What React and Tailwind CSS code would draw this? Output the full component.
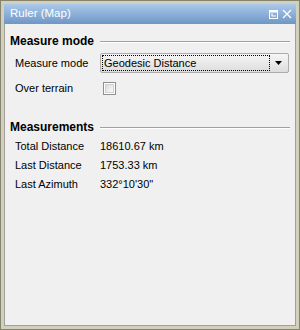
const font = { fontFamily: '"Liberation Sans", Arial, sans-serif' };

function Heading({ children }) {
  return (
    <div className="flex items-center h-4 pl-[5px] pr-[5px]">
      <span className="text-[12px] font-bold text-black leading-none">{children}</span>
      <div className="flex-1 ml-[6px] mt-[2px] flex flex-col">
        <div className="h-px bg-[#a0a0a0]" />
        <div className="h-px bg-white" />
      </div>
    </div>
  );
}

function Row({ label, children }) {
  return (
    <div className="flex items-center h-[19px] pl-[10px]">
      <span className="w-[85px] text-[11px] text-black">{label}</span>
      <span className="text-[11px] text-black">{children}</span>
    </div>
  );
}

export default function App() {
  return (
    <div className="w-[300px] h-[330px] bg-[#85846f] p-px" style={font}>
      <div className="h-full bg-[#d3cfbd] p-[3px] flex flex-col">
        <div className="h-5 flex items-center pl-[6px] pr-[4px] bg-gradient-to-b from-[#abc9ea] to-[#6e97c5]">
          <span className="text-[11.5px] text-white flex-1">Ruler (Map)</span>
          <svg width="9" height="9" viewBox="0 0 9 9" className="mr-[4px]">
            <rect x="0.5" y="0.5" width="8" height="8" fill="none" stroke="white" />
            <rect x="1" y="1" width="7" height="1.5" fill="white" />
            <path d="M3 3.5 V6 H7" fill="none" stroke="white" strokeWidth="1.2" />
          </svg>
          <svg width="10" height="10" viewBox="0 0 10 10">
            <path d="M1 1 L9 9 M9 1 L1 9" stroke="white" strokeWidth="1.3" />
          </svg>
        </div>
        <div className="flex-1 bg-[#f0f0f0] border border-t-0 border-[#a09f98]">
          <div className="pt-[9px]">
            <Heading>Measure mode</Heading>
          </div>
          <div className="flex items-center h-5 mt-[4px] pl-[10px]">
            <span className="w-[85px] text-[11px] text-black">Measure mode</span>
            <div className="w-[189px] h-5 border border-[#acacac] rounded-[2px] bg-gradient-to-b from-[#f6f6f6] to-[#dddddd] flex items-center p-px">
              <div className="flex-1 h-full border border-dotted border-black flex items-center pl-px">
                <span className="text-[11px] text-black">Geodesic Distance</span>
              </div>
              <div className="w-[17px] flex items-center justify-center">
                <svg width="7" height="4" viewBox="0 0 7 4">
                  <path d="M0 0 H7 L3.5 4 Z" fill="black" />
                </svg>
              </div>
            </div>
          </div>
          <div className="flex items-center h-[19px] mt-[6px] pl-[10px]">
            <span className="w-[88px] text-[11px] text-black">Over terrain</span>
            <div className="w-[13px] h-[13px] border border-[#8e8f8f] p-px bg-white">
              <div className="w-full h-full border border-[#d0d0d0] bg-gradient-to-br from-[#dcdcdc] to-[#fbfbfb]" />
            </div>
          </div>
          <div className="mt-[21px]">
            <Heading>Measurements</Heading>
          </div>
          <div className="mt-[2px]">
            <Row label="Total Distance">18610.67 km</Row>
            <Row label="Last Distance">1753.33 km</Row>
            <Row label="Last Azimuth">332°10'30"</Row>
          </div>
        </div>
      </div>
    </div>
  );
}
